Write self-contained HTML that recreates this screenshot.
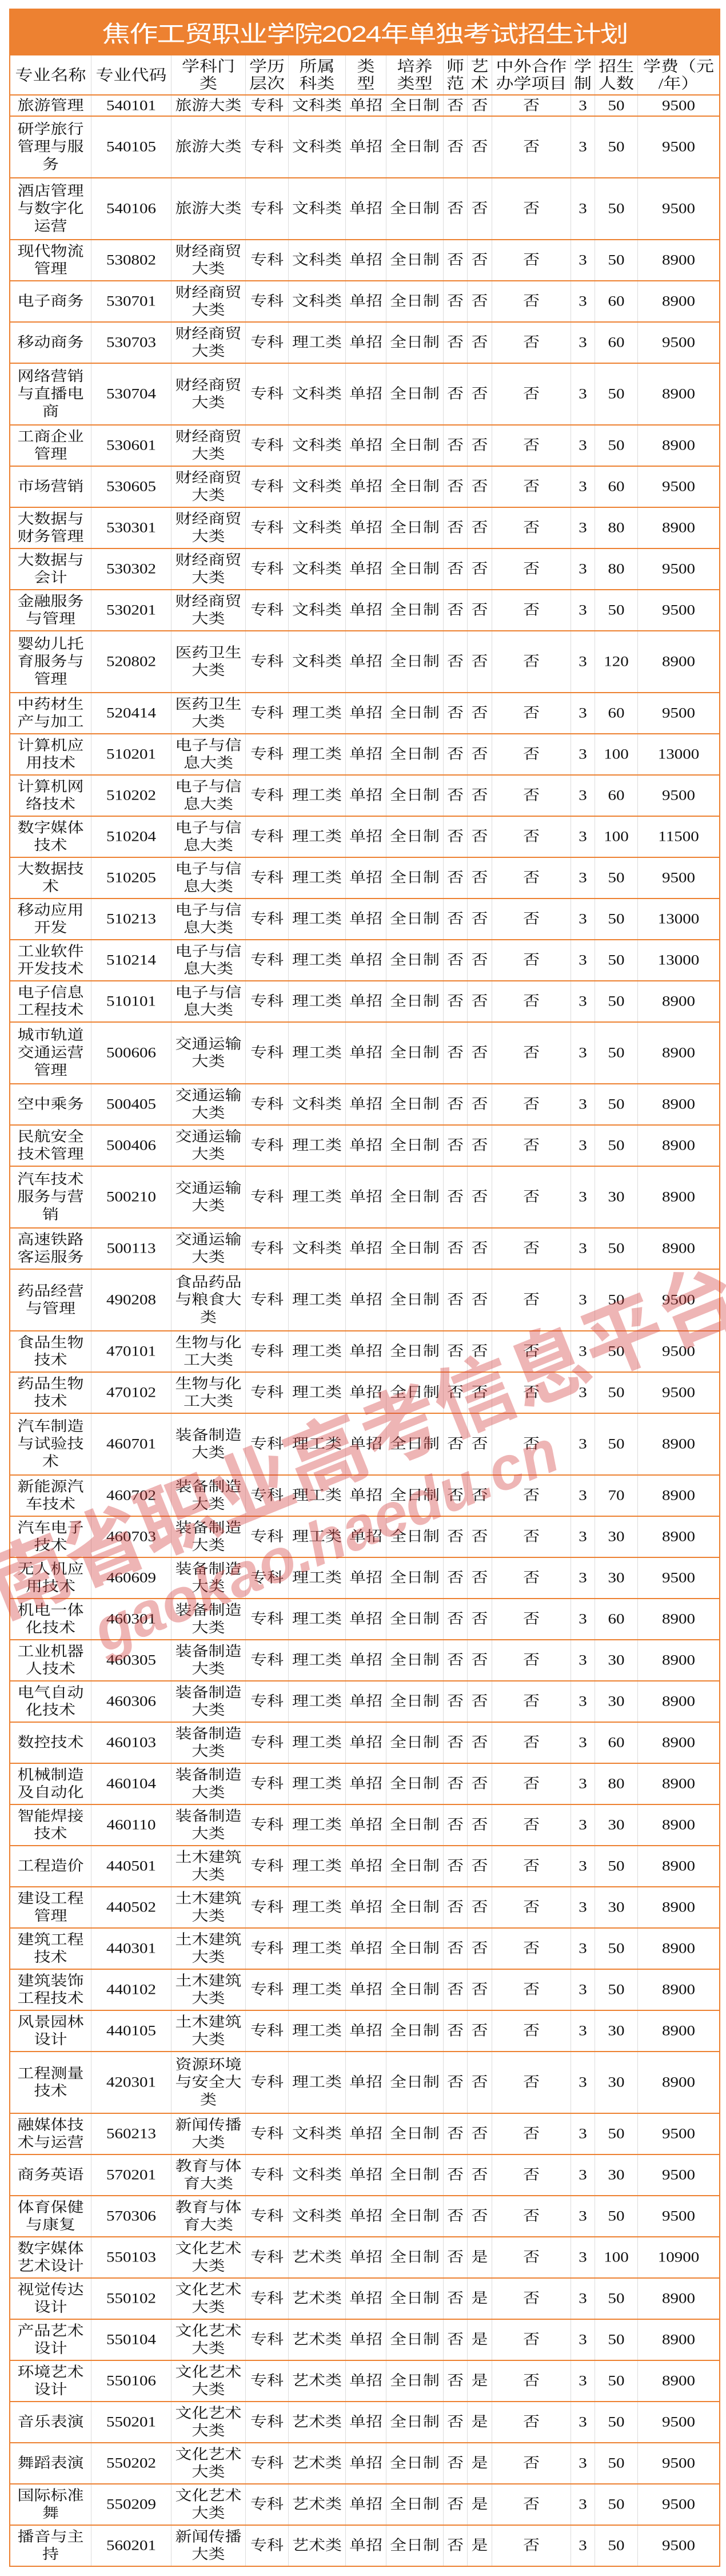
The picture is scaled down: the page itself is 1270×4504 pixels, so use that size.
<!DOCTYPE html>
<html><head><meta charset="utf-8">
<style>
*{margin:0;padding:0;box-sizing:border-box}
html,body{width:1270px;height:4504px;background:#fff;overflow:hidden}
body{position:relative;font-family:"Liberation Serif","Noto Serif CJK SC",serif;color:#111}
.title{position:absolute;left:16px;top:15px;width:1244px;height:82px;background:#ED8131;color:#fff;font-size:50px;display:flex;align-items:center;justify-content:center;font-family:"Liberation Sans","Noto Sans CJK SC",sans-serif}
.title span{display:block;transform:scaleY(.8);letter-spacing:-2px}
.tbl{position:absolute;left:16px;top:97px;width:1244px;border-left:2px solid #ED8131;border-right:2px solid #ED8131}
.r{display:flex;border-bottom:2px solid #ED8131;width:1240px}
.c{flex:none;display:flex;align-items:center;justify-content:center;text-align:center;border-right:1px solid #dcdcdc;font-size:29px;line-height:36px;padding:0 3px;overflow:hidden}
.c:last-child{border-right:none}
.c>div{transform:scaleY(.86);word-break:break-all}
.h .c{font-size:31px;line-height:35px}
.w0{width:142px}.w1{width:140px}.w2{width:130px}.w3{width:75px}.w4{width:100px}.w5{width:71px}.w6{width:100px}.w7{width:42px}.w8{width:43px}.w9{width:138px}.w10{width:42px}.w11{width:75px}.w12{width:142px}
.l1{height:37px}.l2{height:72px}.l3{height:108px}
.wm{position:absolute;color:rgba(210,60,60,.38);font-family:"Liberation Sans","Noto Sans CJK SC",sans-serif;font-weight:bold;white-space:nowrap;transform-origin:center center}
</style></head><body>
<div class="title"><span>焦作工贸职业学院2024年单独考试招生计划</span></div>
<div class="tbl">
<div class="r h" style="height:70px">
<div class="c w0"><div>专业名称</div></div><div class="c w1"><div>专业代码</div></div><div class="c w2"><div>学科门<br>类</div></div><div class="c w3"><div>学历<br>层次</div></div><div class="c w4"><div>所属<br>科类</div></div><div class="c w5"><div>类<br>型</div></div><div class="c w6"><div>培养<br>类型</div></div><div class="c w7"><div>师<br>范</div></div><div class="c w8"><div>艺<br>术</div></div><div class="c w9"><div>中外合作<br>办学项目</div></div><div class="c w10"><div>学<br>制</div></div><div class="c w11"><div>招生<br>人数</div></div><div class="c w12"><div>学费（元<br>/年）</div></div>
</div>
<div id="rows"></div>
</div>
<div class="wm" style="left:567px;top:2537px;font-size:140px;letter-spacing:0px;transform:translate(-50%,-50%) rotate(-22deg)">河南省职业高考信息平台</div>
<div class="wm" style="left:570px;top:2695px;font-size:106px;font-style:italic;transform:translate(-50%,-50%) rotate(-22deg)">gaokao.haedu.cn</div>
<script>
var d=[
[1,"旅游管理","540101","旅游大类","文科类","否",50,9500],
[3,"研学旅行管理与服务","540105","旅游大类","文科类","否",50,9500],
[3,"酒店管理与数字化运营","540106","旅游大类","文科类","否",50,9500],
[2,"现代物流管理","530802","财经商贸大类","文科类","否",50,8900],
[2,"电子商务","530701","财经商贸大类","文科类","否",60,8900],
[2,"移动商务","530703","财经商贸大类","理工类","否",60,9500],
[3,"网络营销与直播电商","530704","财经商贸大类","文科类","否",50,8900],
[2,"工商企业管理","530601","财经商贸大类","文科类","否",50,8900],
[2,"市场营销","530605","财经商贸大类","文科类","否",60,9500],
[2,"大数据与财务管理","530301","财经商贸大类","文科类","否",80,8900],
[2,"大数据与会计","530302","财经商贸大类","文科类","否",80,9500],
[2,"金融服务与管理","530201","财经商贸大类","文科类","否",50,9500],
[3,"婴幼儿托育服务与管理","520802","医药卫生大类","文科类","否",120,8900],
[2,"中药材生产与加工","520414","医药卫生大类","理工类","否",60,9500],
[2,"计算机应用技术","510201","电子与信息大类","理工类","否",100,13000],
[2,"计算机网络技术","510202","电子与信息大类","理工类","否",60,9500],
[2,"数字媒体技术","510204","电子与信息大类","理工类","否",100,11500],
[2,"大数据技术","510205","电子与信息大类","理工类","否",50,9500],
[2,"移动应用开发","510213","电子与信息大类","理工类","否",50,13000],
[2,"工业软件开发技术","510214","电子与信息大类","理工类","否",50,13000],
[2,"电子信息工程技术","510101","电子与信息大类","理工类","否",50,8900],
[3,"城市轨道交通运营管理","500606","交通运输大类","理工类","否",50,8900],
[2,"空中乘务","500405","交通运输大类","文科类","否",50,8900],
[2,"民航安全技术管理","500406","交通运输大类","理工类","否",50,8900],
[3,"汽车技术服务与营销","500210","交通运输大类","理工类","否",30,8900],
[2,"高速铁路客运服务","500113","交通运输大类","文科类","否",50,8900],
[3,"药品经营与管理","490208","食品药品与粮食大类","理工类","否",50,9500],
[2,"食品生物技术","470101","生物与化工大类","理工类","否",50,9500],
[2,"药品生物技术","470102","生物与化工大类","理工类","否",50,9500],
[3,"汽车制造与试验技术","460701","装备制造大类","理工类","否",50,8900],
[2,"新能源汽车技术","460702","装备制造大类","理工类","否",70,8900],
[2,"汽车电子技术","460703","装备制造大类","理工类","否",30,8900],
[2,"无人机应用技术","460609","装备制造大类","理工类","否",30,9500],
[2,"机电一体化技术","460301","装备制造大类","理工类","否",60,8900],
[2,"工业机器人技术","460305","装备制造大类","理工类","否",30,8900],
[2,"电气自动化技术","460306","装备制造大类","理工类","否",30,8900],
[2,"数控技术","460103","装备制造大类","理工类","否",60,8900],
[2,"机械制造及自动化","460104","装备制造大类","理工类","否",80,8900],
[2,"智能焊接技术","460110","装备制造大类","理工类","否",30,8900],
[2,"工程造价","440501","土木建筑大类","理工类","否",50,8900],
[2,"建设工程管理","440502","土木建筑大类","理工类","否",30,8900],
[2,"建筑工程技术","440301","土木建筑大类","理工类","否",50,8900],
[2,"建筑装饰工程技术","440102","土木建筑大类","理工类","否",50,8900],
[2,"风景园林设计","440105","土木建筑大类","理工类","否",30,8900],
[3,"工程测量技术","420301","资源环境与安全大类","理工类","否",30,8900],
[2,"融媒体技术与运营","560213","新闻传播大类","文科类","否",50,9500],
[2,"商务英语","570201","教育与体育大类","文科类","否",30,9500],
[2,"体育保健与康复","570306","教育与体育大类","文科类","否",50,9500],
[2,"数字媒体艺术设计","550103","文化艺术大类","艺术类","是",100,10900],
[2,"视觉传达设计","550102","文化艺术大类","艺术类","是",50,8900],
[2,"产品艺术设计","550104","文化艺术大类","艺术类","是",50,8900],
[2,"环境艺术设计","550106","文化艺术大类","艺术类","是",50,8900],
[2,"音乐表演","550201","文化艺术大类","艺术类","是",50,9500],
[2,"舞蹈表演","550202","文化艺术大类","艺术类","是",50,9500],
[2,"国际标准舞","550209","文化艺术大类","艺术类","是",50,9500],
[2,"播音与主持","560201","新闻传播大类","艺术类","是",50,9500]
];
var h="";
d.forEach(function(r){
var v=[r[1],r[2],r[3],"专科",r[4],"单招","全日制","否",r[5],"否","3",r[6],r[7]];
h+='<div class="r l'+r[0]+'">';
v.forEach(function(t,i){h+='<div class="c w'+i+'"><div>'+t+'</div></div>';});
h+='</div>';
});
document.getElementById("rows").innerHTML=h;
</script>
</body></html>
